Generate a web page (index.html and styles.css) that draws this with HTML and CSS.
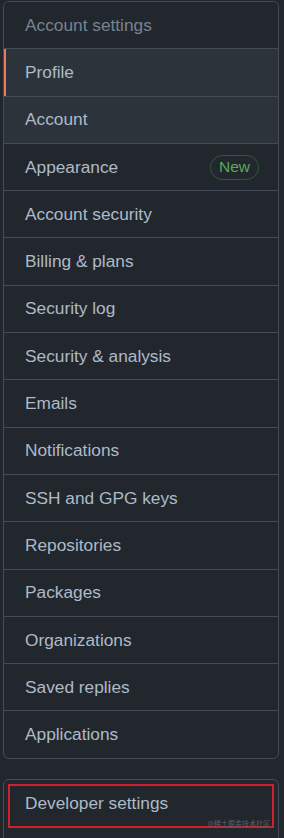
FILE: index.html
```html
<!DOCTYPE html>
<html>
<head>
<meta charset="utf-8">
<link rel="stylesheet" href="styles.css">
</head>
<body>
<nav class="menu">
  <div class="menu-heading">Account settings</div>
  <a class="menu-item selected">Profile</a>
  <a class="menu-item hover">Account</a>
  <a class="menu-item">Appearance <span class="badge">New</span></a>
  <a class="menu-item">Account security</a>
  <a class="menu-item">Billing &amp; plans</a>
  <a class="menu-item">Security log</a>
  <a class="menu-item">Security &amp; analysis</a>
  <a class="menu-item">Emails</a>
  <a class="menu-item">Notifications</a>
  <a class="menu-item">SSH and GPG keys</a>
  <a class="menu-item">Repositories</a>
  <a class="menu-item">Packages</a>
  <a class="menu-item">Organizations</a>
  <a class="menu-item">Saved replies</a>
  <a class="menu-item">Applications</a>
</nav>
<nav class="menu dev">
  <a class="menu-item">Developer settings</a>
  <div class="highlight"></div>
  <span class="watermark">@稀土掘金技术社区</span>
</nav>
</body>
</html>
```
FILE: styles.css
```css
html, body {
  margin: 0;
  padding: 0;
  background: #22272e;
  height: 100%;
  overflow: hidden;
}
body {
  padding: 1px 0 0 3px;
  font-family: "Liberation Sans", Arial, sans-serif;
  font-size: 17.3px;
  color: #adbac7;
}
.menu {
  width: 274px;
  border: 1px solid #444c56;
  border-radius: 6px;
  display: flex;
  flex-direction: column;
  overflow: hidden;
}
.menu-heading {
  height: 46.3px;
  display: flex;
  align-items: center;
  padding-left: 21px;
  color: #768390;
  background: #22272e;
}
.menu-item {
  position: relative;
  height: 46.3px;
  display: flex;
  align-items: center;
  justify-content: space-between;
  padding: 0 19px 0 21px;
  border-top: 1px solid #444c56;
  color: #adbac7;
  text-decoration: none;
}
.menu-item.selected,
.menu-item.hover {
  background: #2d333b;
}
.menu-item.selected::before {
  content: "";
  position: absolute;
  left: 0;
  top: 0;
  bottom: 0;
  width: 2px;
  background: #ec775c;
}
.badge {
  font-size: 15.5px;
  color: #57ab5a;
  border: 1px solid #2f5a36;
  border-radius: 13px;
  padding: 3px 8px 4px;
  line-height: 16px;
}
.dev {
  position: relative;
  margin-top: 20px;
  height: 70px;
}
.dev .menu-item {
  border-top: none;
  height: 47px;
}
.highlight {
  position: absolute;
  left: 4px;
  top: 4px;
  width: 262px;
  height: 40px;
  border: 2px solid #d0202e;
}
.watermark {
  position: absolute;
  right: 8px;
  top: 38px;
  font-family: "Noto Sans CJK SC", sans-serif;
  font-size: 7px;
  color: #5a5f68;
}
```
